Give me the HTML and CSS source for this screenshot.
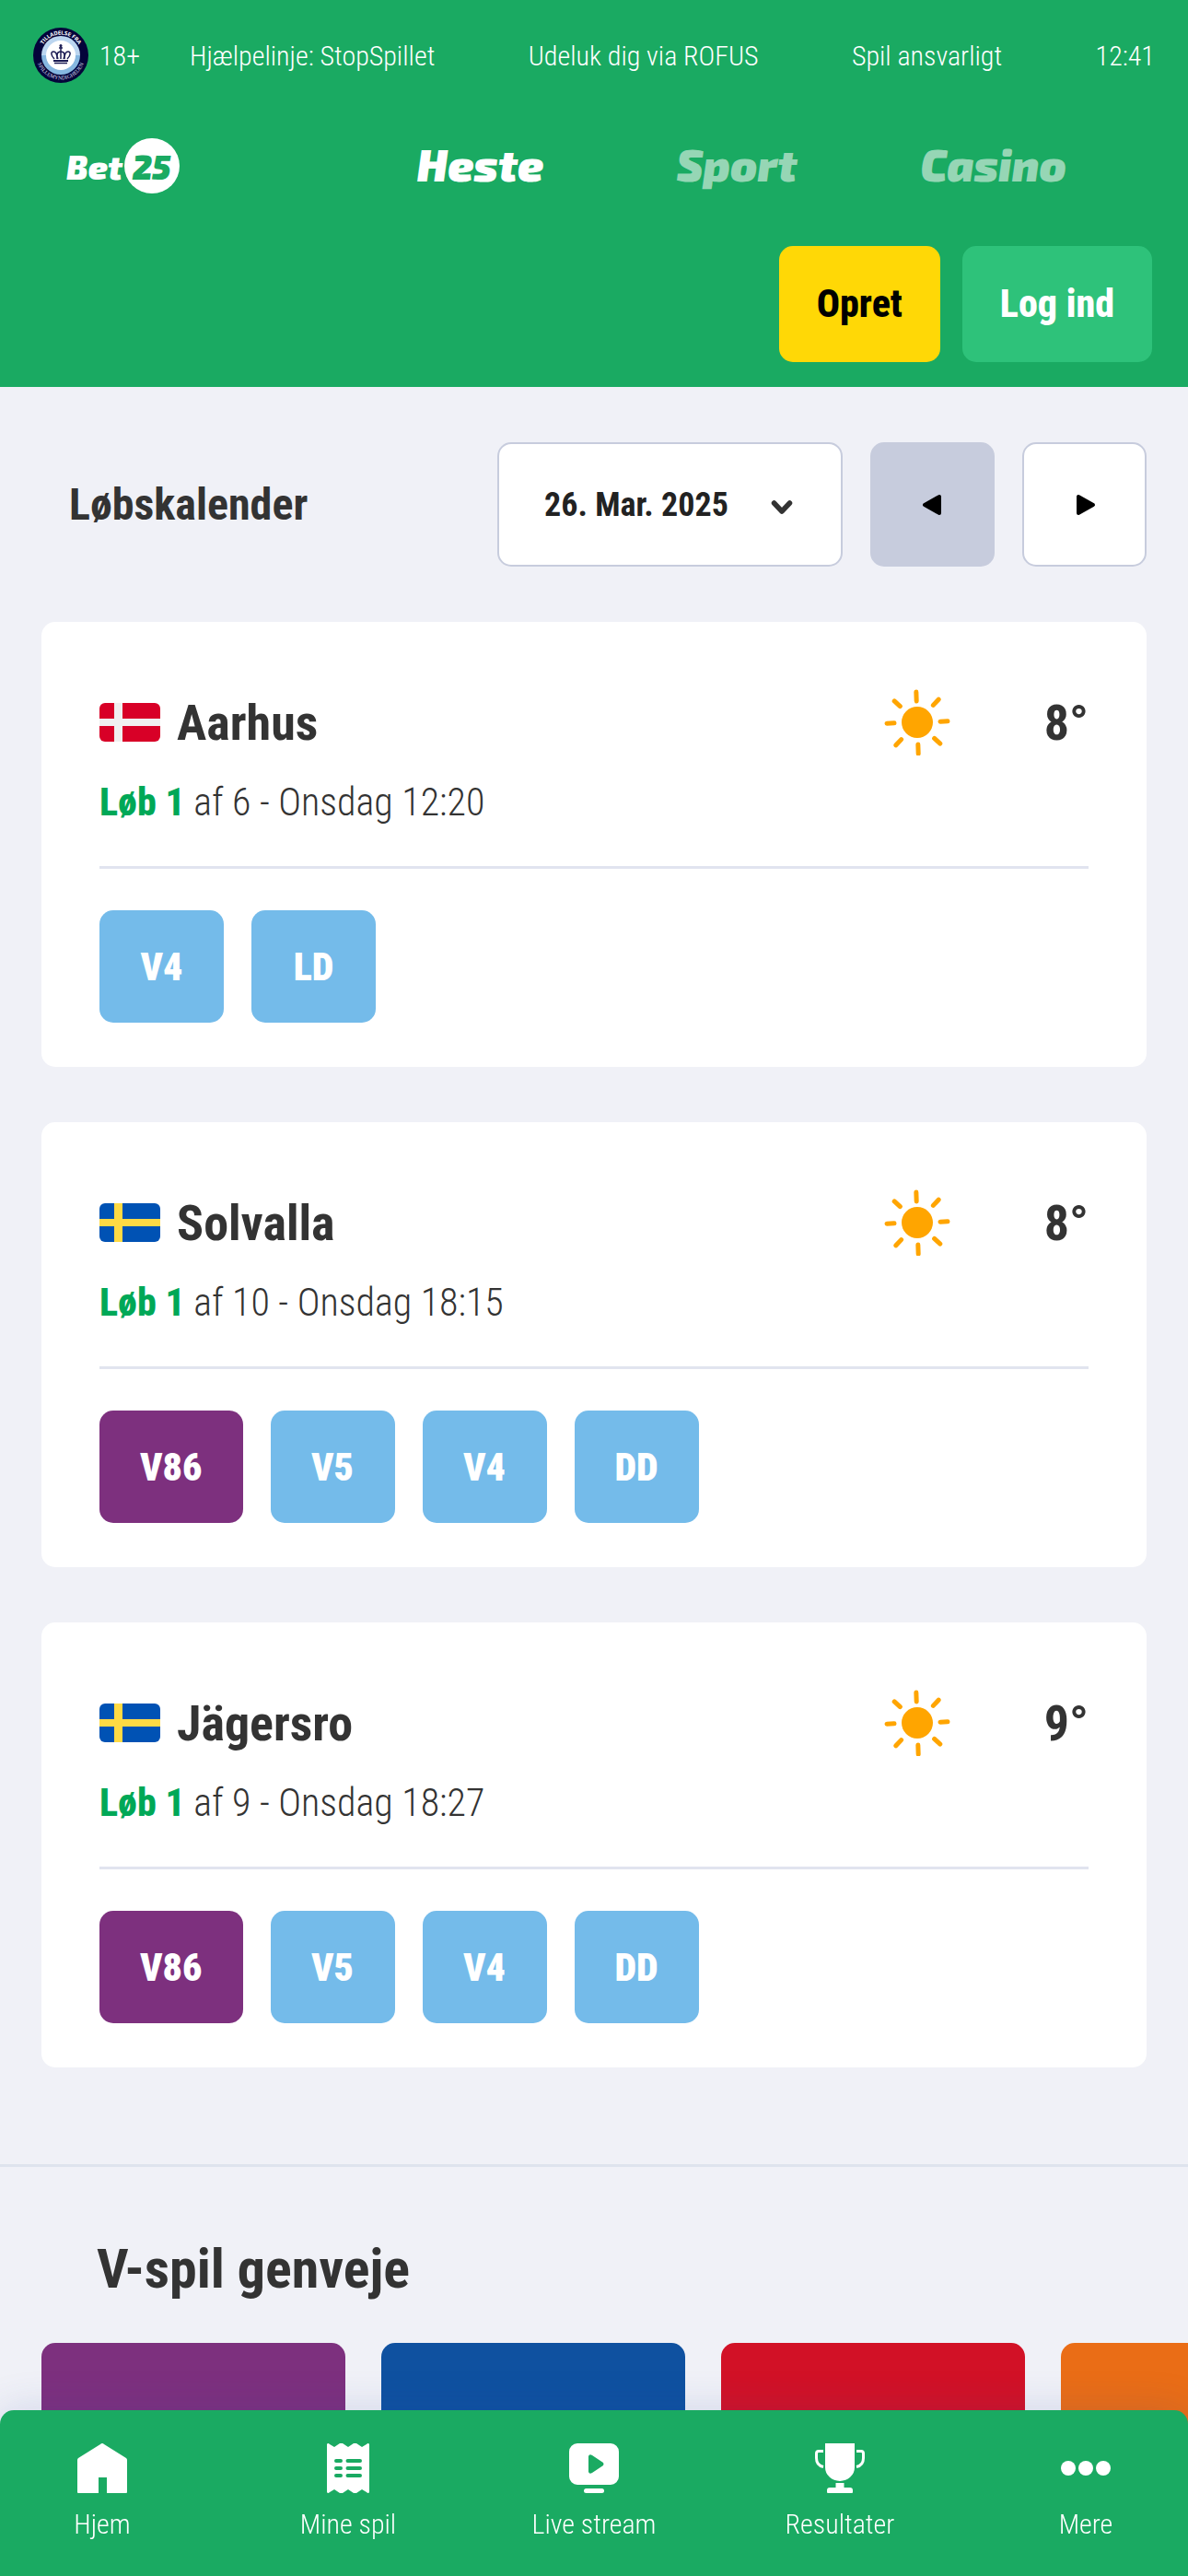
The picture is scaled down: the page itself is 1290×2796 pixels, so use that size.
FILE: index.html
```html
<!DOCTYPE html>
<html lang="da">
<head>
<meta charset="utf-8">
<meta name="viewport" content="width=device-width, initial-scale=1">
<title>Bet25 – Heste</title>
<link rel="stylesheet" href="styles.css">
</head>
<body>
<svg class="sprite" aria-hidden="true">
  <symbol id="flag-dk" viewBox="0 0 66 42">
    <rect width="66" height="42" fill="#d80027"/>
    <path d="M16 0h9v42h-9zM0 17h66v8H0z" fill="#f0f0f0"/>
  </symbol>
  <symbol id="flag-se" viewBox="0 0 66 42">
    <rect width="66" height="42" fill="#0052b4"/>
    <path d="M16 0h9v42h-9zM0 17h66v8H0z" fill="#ffda44"/>
  </symbol>
  <symbol id="sun" viewBox="-36 -36 72 72">
    <circle r="17" fill="#ffa500"/>
    <g transform="rotate(-2)" stroke="#ffa500" stroke-width="5" stroke-linecap="round">
      <path d="M0-33v10M0 24v10M-33 0h8M25 0h8M-24-24l6 6M24-24l-6 6M-24 24l6-6M24 24l-6-6"/>
    </g>
  </symbol>
</svg>

<header class="site-header">
  <div class="topbar">
    <svg class="seal" viewBox="0 0 60 60" role="img" aria-label="Tilladelse fra Spillemyndigheden">
      <defs>
        <path id="seal-top" d="M7.500 30a22.500 22.500 0 0 1 45 0"/>
        <path id="seal-bottom" d="M3.500 30a26.500 26.500 0 0 0 53 0"/>
      </defs>
      <circle cx="30" cy="30" r="30" fill="#04043a"/>
      <path d="M9 30a21 21 0 0 1 42 0z" fill="#bcd6f0"/>
      <path d="M9 30a21 21 0 0 0 42 0z" fill="#86b7e0"/>
      <circle cx="30" cy="30" r="16" fill="#fff"/>
      <g fill="none" stroke="#1c1c54" stroke-width="1.500">
        <path d="M23 34c-4-4-4-8-1-8 3 0 4 4 4 8M37 34c4-4 4-8 1-8-3 0-4 4-4 8M30 20v14M27 34c-2-5-1-8 3-8M33 34c2-5 1-8-3-8M28 22h4"/>
        <path d="M22 36h16" stroke-width="2"/>
        <path d="M23 38.500h14"/>
      </g>
      <circle cx="30" cy="19.500" r="1.500" fill="#1c1c54"/>
      <text class="seal-text"><textPath href="#seal-top" startOffset="50%" text-anchor="middle">TILLADELSE FRA</textPath></text>
      <text class="seal-text seal-text-serif"><textPath href="#seal-bottom" startOffset="50%" text-anchor="middle">SPILLEMYNDIGHEDEN</textPath></text>
    </svg>
    <span class="age">18+</span>
    <div class="topbar-links">
      <a href="#stopspillet">Hjælpelinje: StopSpillet</a>
      <a href="#rofus">Udeluk dig via ROFUS</a>
      <a href="#ansvarligt">Spil ansvarligt</a>
      <time>12:41</time>
    </div>
  </div>

  <div class="brandbar">
    <a class="logo" href="#" aria-label="Bet25">
      <span>Bet</span><span class="logo-ball">25</span>
    </a>
    <nav class="products" aria-label="Produkter">
      <a class="active" href="#heste">Heste</a>
      <a href="#sport">Sport</a>
      <a href="#casino">Casino</a>
    </nav>
  </div>

  <div class="account">
    <button class="btn btn-create" type="button">Opret</button>
    <button class="btn btn-login" type="button">Log ind</button>
  </div>
</header>

<main>
  <section class="calendar">
    <div class="calendar-head">
      <h1><label for="race-date">Løbskalender</label></h1>
      <div class="date-picker">
        <select id="race-date"><option>26. Mar. 2025</option></select>
        <svg class="chevron" viewBox="0 0 24 24" aria-hidden="true"><path d="M3.500 10l8.500 9 8.500-9" fill="none" stroke="#333" stroke-width="5.500" stroke-linecap="round" stroke-linejoin="round"/></svg>
      </div>
      <button class="step step-prev" type="button" aria-label="Forrige dag">
        <svg viewBox="0 0 24 24"><path d="M19 3v18L3 12z" stroke="#000" stroke-width="4" stroke-linejoin="round"/></svg>
      </button>
      <button class="step" type="button" aria-label="Næste dag">
        <svg viewBox="0 0 24 24"><path d="M5 3v18l16-9z" stroke="#000" stroke-width="4" stroke-linejoin="round"/></svg>
      </button>
    </div>

    <article class="card">
      <div class="card-head">
        <svg class="flag"><use href="#flag-dk"/></svg>
        <h2>Aarhus</h2>
        <svg class="sun"><use href="#sun"/></svg>
        <span class="temp">8°</span>
      </div>
      <p class="race"><strong>Løb 1</strong> af 6 - Onsdag 12:20</p>
      <div class="games">
        <button class="game" type="button">V4</button>
        <button class="game" type="button">LD</button>
      </div>
    </article>

    <article class="card">
      <div class="card-head">
        <svg class="flag"><use href="#flag-se"/></svg>
        <h2>Solvalla</h2>
        <svg class="sun"><use href="#sun"/></svg>
        <span class="temp">8°</span>
      </div>
      <p class="race"><strong>Løb 1</strong> af 10 - Onsdag 18:15</p>
      <div class="games">
        <button class="game game-v86" type="button">V86</button>
        <button class="game" type="button">V5</button>
        <button class="game" type="button">V4</button>
        <button class="game" type="button">DD</button>
      </div>
    </article>

    <article class="card">
      <div class="card-head">
        <svg class="flag"><use href="#flag-se"/></svg>
        <h2>Jägersro</h2>
        <svg class="sun"><use href="#sun"/></svg>
        <span class="temp">9°</span>
      </div>
      <p class="race"><strong>Løb 1</strong> af 9 - Onsdag 18:27</p>
      <div class="games">
        <button class="game game-v86" type="button">V86</button>
        <button class="game" type="button">V5</button>
        <button class="game" type="button">V4</button>
        <button class="game" type="button">DD</button>
      </div>
    </article>
  </section>

  <section class="shortcuts">
    <h2>V-spil genveje</h2>
    <div class="tiles">
      <div class="tile tile-purple"></div>
      <div class="tile tile-blue"></div>
      <div class="tile tile-red"></div>
      <div class="tile tile-orange"></div>
    </div>
  </section>
</main>

<nav class="tabbar" aria-label="Hovedmenu">
  <a href="#hjem">
    <svg viewBox="0 0 54 54"><path d="M27 0q1 0 2 1l24 15q1 1 1 2v35q0 1-1 1H32V37h-9v17H1q-1 0-1-1V18q0-1 1-2L25 1q1-1 2-1z"/></svg>
    Hjem
  </a>
  <a href="#minespil">
    <svg viewBox="0 0 54 54"><path fill-rule="evenodd" d="M4 1q1-2 3 0l5 3 6-4h3l6 4 6-4h3l6 4 5-3q2-2 3 0v52q-1 2-3 0l-5-3-6 4h-3l-6-4-6 4h-3l-6-4-5 3q-2 2-3 0zM14 17a2 2 0 0 0 0 4h5a2 2 0 0 0 0-4zm12.500 0a2 2 0 0 0 0 4H40a2 2 0 0 0 0-4zM14 25a2 2 0 0 0 0 4h5a2 2 0 0 0 0-4zm12.500 0a2 2 0 0 0 0 4H40a2 2 0 0 0 0-4zM14 33a2 2 0 0 0 0 4h5a2 2 0 0 0 0-4zm12.500 0a2 2 0 0 0 0 4H40a2 2 0 0 0 0-4z"/></svg>
    Mine spil
  </a>
  <a href="#live">
    <svg viewBox="0 0 54 54"><path fill-rule="evenodd" d="M9 0h36a9 9 0 0 1 9 9v27a9 9 0 0 1-9 9H9a9 9 0 0 1-9-9V9a9 9 0 0 1 9-9zm12 14v17q1 3 4 1l12-8q1-1.500 0-3L25 13q-3-2-4 1z"/><rect x="16" y="49" width="22" height="5" rx="2.500"/></svg>
    Live stream
  </a>
  <a href="#resultater">
    <svg viewBox="0 0 54 54"><path d="M11 0h32v26a16 15 0 0 1-32 0zM22.500 43h9v5H38q3 0 3 3v2q0 1-1 1H14q-1 0-1-1v-2q0-3 3-3h6.500z"/><path d="M9 8.500H4q-2.500 0-2.500 2.500v5q0 8 7.500 9.500M45 8.500h5q2.500 0 2.500 2.500v5q0 8-7.500 9.500" fill="none" stroke="#fff" stroke-width="3"/></svg>
    Resultater
  </a>
  <a href="#mere">
    <svg viewBox="0 0 54 54"><circle cx="8" cy="27" r="8"/><circle cx="27" cy="27" r="8"/><circle cx="46" cy="27" r="8"/></svg>
    Mere
  </a>
</nav>
</body>
</html>
```
FILE: styles.css
```css
:root {
  --green: #1aaa62;
  --page: #f0f1f7;
  --ink: #333;
  --line: #c7ccdd;
  --sky: #74bbea;
  --purple: #7d307e;
  --radius: 15px;
}

* { box-sizing: border-box; }

body {
  margin: 0;
  background: var(--page);
  color: var(--ink);
  font-family: "Roboto Condensed", Roboto, sans-serif;
  font-size: 30px;
}

a { color: inherit; text-decoration: none; }
h1, h2, p { margin: 0; }
svg { flex: none; display: block; }
button, select { font-family: inherit; border: 0; margin: 0; cursor: pointer; }

.sprite { position: absolute; width: 0; height: 0; }

/* Header */
.site-header { background: var(--green); color: #fff; }

.topbar {
  display: flex;
  align-items: center;
  height: 120px;
  padding: 0 36px;
  font-weight: 300;
}
.seal { width: 60px; height: 60px; margin-right: 12px; }
.seal-text { font: 700 6px "Exo 2", sans-serif; fill: #fff; }
.seal-text-serif { font: 400 6px "Liberation Serif", serif; fill: #d5d8ea; }
.age { margin-right: 54px; }
.topbar-links { flex: 1; display: flex; justify-content: space-between; }

.brandbar {
  display: flex;
  align-items: center;
  height: 120px;
  padding: 0 72px;
  font-family: "Exo 2", sans-serif;
  font-style: italic;
  font-weight: 900;
}
.logo {
  display: flex;
  align-items: center;
  gap: 2px;
  width: 310px;
  font-size: 36px;
}
.logo-ball {
  display: grid;
  place-items: center;
  width: 60px;
  height: 60px;
  border-radius: 50%;
  background: #fff;
  color: var(--green);
}
.products {
  flex: 1;
  display: grid;
  grid-template-columns: repeat(3, 1fr);
  padding-bottom: 4px;
  font-size: 48px;
  text-align: center;
}
.products a { color: #96d6b5; }
.products .active { color: #fff; }

.account {
  display: flex;
  justify-content: flex-end;
  gap: 24px;
  padding: 27px 39px;
}
.btn {
  height: 126px;
  padding: 0 41px 2px;
  border-radius: var(--radius);
  font-size: 42px;
  font-weight: 800;
}
.btn-create { background: #ffd806; color: #000; }
.btn-login { background: #2ec27a; color: #fff; }

/* Race calendar */
.calendar {
  display: flex;
  flex-direction: column;
  gap: 60px;
  padding: 60px 45px 105px;
}
.calendar-head { display: flex; align-items: center; gap: 30px; }
.calendar-head h1 { flex: 1; padding-left: 30px; font-size: 48px; }

.date-picker { position: relative; }
.date-picker select {
  appearance: none;
  width: 375px;
  height: 135px;
  padding: 0 49px;
  border: 2px solid var(--line);
  border-radius: var(--radius);
  background: #fff;
  color: #222;
  font-size: 36px;
  font-weight: 700;
}
.chevron {
  position: absolute;
  right: 54px;
  top: 56px;
  width: 24px;
  height: 24px;
  pointer-events: none;
}
.step {
  display: grid;
  place-items: center;
  width: 135px;
  height: 135px;
  border: 2px solid var(--line);
  border-radius: var(--radius);
  background: #fff;
}
.step-prev { background: var(--line); }
.step svg { width: 24px; height: 24px; }

.card {
  padding: 64px 63px 48px;
  border-radius: var(--radius);
  background: #fff;
}
.card-head { display: flex; align-items: center; height: 90px; }
.flag { width: 66px; height: 42px; margin-right: 18px; border-radius: 6px; }
.card-head h2 { flex: 1; font-size: 54px; }
.sun { width: 72px; height: 72px; }
.temp { width: 150px; text-align: right; font-size: 54px; font-weight: 700; }

.race {
  margin-top: 12px;
  padding-bottom: 39px;
  border-bottom: 3px solid #e1e4ef;
  font-size: 42px;
  font-weight: 300;
  line-height: 60px;
}
.race strong { color: #00a857; font-weight: 800; }

.games { display: flex; gap: 30px; margin-top: 45px; }
.game {
  min-width: 135px;
  height: 122px;
  padding: 0 44px;
  border-radius: var(--radius);
  background: var(--sky);
  color: #fff;
  font-size: 42px;
  font-weight: 900;
}
.game-v86 { background: var(--purple); }

/* Shortcuts */
.shortcuts { padding-top: 75px; border-top: 3px solid #dee3ed; }
.shortcuts h2 { padding-left: 105px; font-size: 60px; line-height: 72px; }
.tiles {
  display: flex;
  gap: 39px;
  margin-top: 44px;
  padding-left: 45px;
  overflow-x: auto;
  scrollbar-width: none;
}
.tile { flex: none; width: 330px; height: 225px; border-radius: var(--radius); }
.tile-purple { background: var(--purple); }
.tile-blue { background: #0f51a0; }
.tile-red { background: #d21126; }
.tile-orange { background: #ea6d16; }

/* Bottom tab bar */
.tabbar {
  position: fixed;
  right: 0;
  bottom: 0;
  left: 0;
  display: flex;
  justify-content: space-between;
  padding: 36px 21px 38px;
  border-radius: var(--radius) var(--radius) 0 0;
  background: var(--green);
  box-shadow: 0 0 45px rgba(40, 70, 160, 0.16);
  color: #fff;
  font-weight: 300;
  line-height: 36px;
}
.tabbar a {
  display: flex;
  flex-direction: column;
  align-items: center;
  gap: 16px;
  width: 180px;
}
.tabbar svg { width: 54px; height: 54px; fill: #fff; }
```
